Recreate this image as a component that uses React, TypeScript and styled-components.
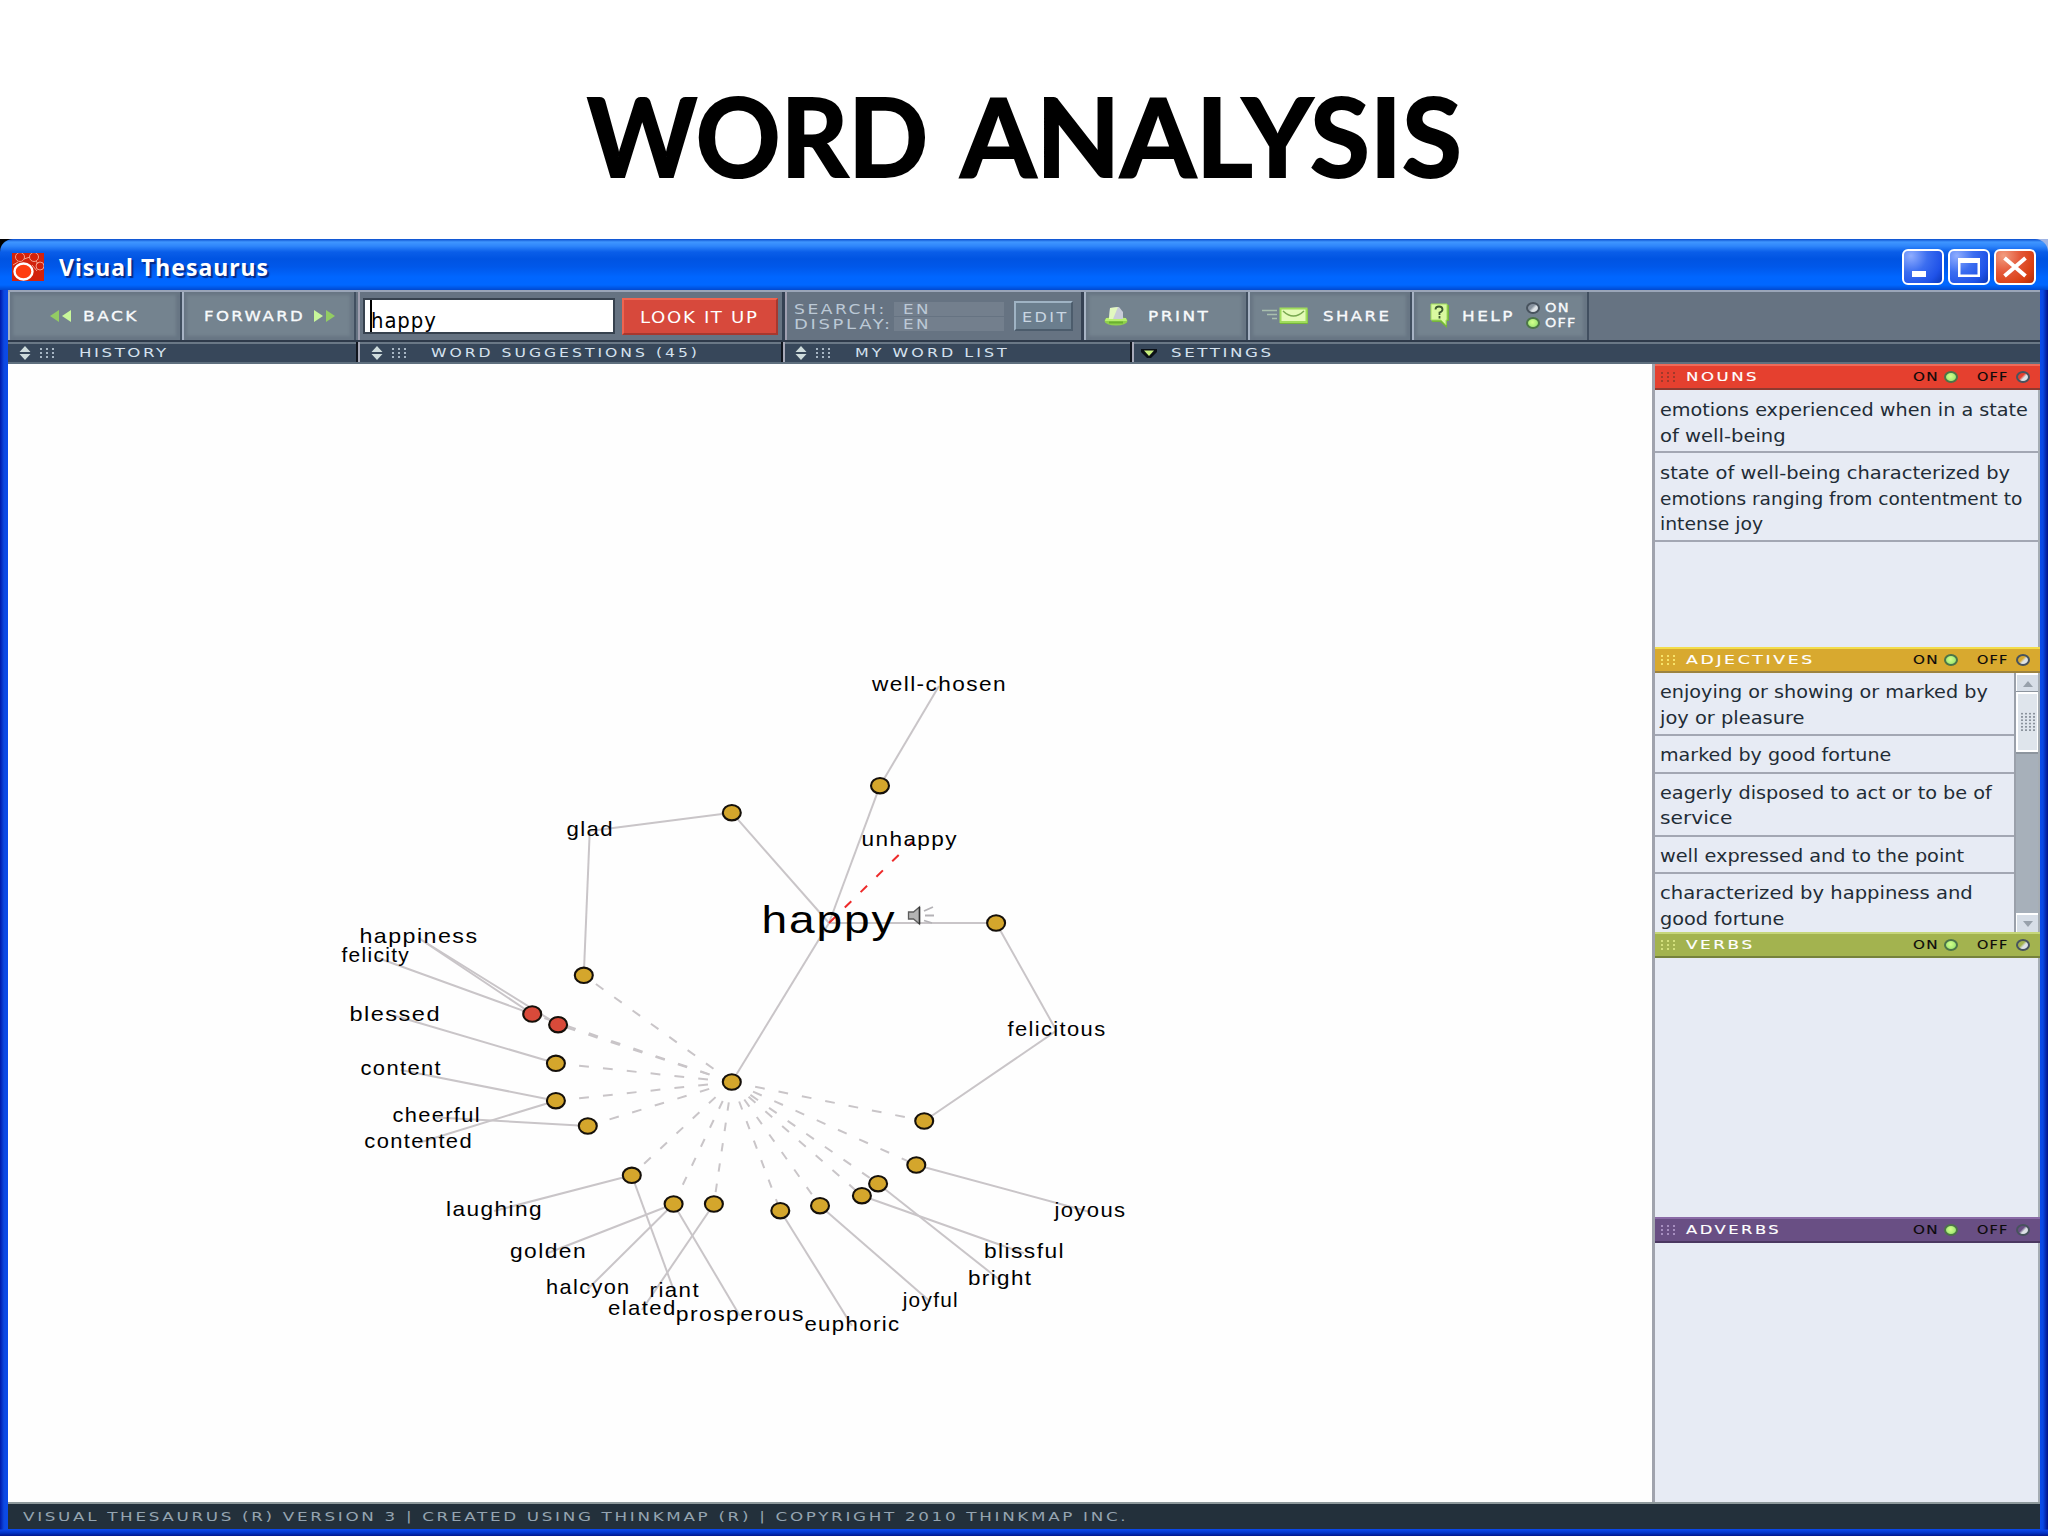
import React, { useLayoutEffect, useRef, useState } from "react";
import styled, { createGlobalStyle } from "styled-components";

const Global = createGlobalStyle`
  *, *::before, *::after { box-sizing: border-box; }
  html, body { margin: 0; padding: 0; background: #fff; }
  body { width: 2048px; height: 1536px; overflow: hidden; font-family: "DejaVu Sans", sans-serif; }
`;

/* ---------- text stretched to a fixed width ---------- */

const FitBox = styled.span<{ $w: number }>`
  display: block;
  flex: none;
  width: ${(p) => p.$w}px;
  white-space: pre;
`;

const FitInner = styled.span<{ $ls: number }>`
  display: inline-block;
  transform-origin: 0 50%;
  letter-spacing: ${(p) => p.$ls}px;
`;

function Fit({ w, ls = 0, children }: { w: number; ls?: number; children: string }) {
  const ref = useRef<HTMLSpanElement>(null);
  const [scale, setScale] = useState(1);
  useLayoutEffect(() => {
    if (ref.current) setScale(w / (ref.current.offsetWidth - ls));
  }, [w, ls, children]);
  return (
    <FitBox $w={w}>
      <FitInner ref={ref} $ls={ls} style={{ transform: `scaleX(${scale})` }}>
        {children}
      </FitInner>
    </FitBox>
  );
}

/* ---------- slide ---------- */

const Slide = styled.main`
  width: 2048px;
  height: 1536px;
  display: flex;
  flex-direction: column;
  background: #fff;
`;

const Heading = styled.h1`
  margin: 0;
  height: 239px;
  flex: none;
  display: flex;
  justify-content: center;
  gap: 33px;
  padding-top: 69px;
  font: 700 109px/132px Lato, "Open Sans", sans-serif;
  color: #000;
  -webkit-text-stroke: 2px #000;
  stroke-linejoin: round;
`;

/* ---------- window frame ---------- */

const WindowBack = styled.section`
  flex: 1;
  min-height: 0;
  background: linear-gradient(90deg, #000 0 50%, #9fb4e4 50%);
`;

const WindowFrame = styled.div`
  height: 100%;
  display: flex;
  flex-direction: column;
  padding: 0 8px 7px;
  border-radius: 13px 13px 0 0;
  background:
    linear-gradient(180deg, #0a4ccc 0, #3f96ff 3px, #2f86fb 7px, #0a5ee9 13px, #0054e2 20px, #0058ea 28px, #0066ff 38px, #0067ff 46px, #0049d0 51px, transparent 51px),
    linear-gradient(180deg, transparent calc(100% - 7px), #0b45e6 calc(100% - 6px), #0233c4 calc(100% - 3px), #00158c 100%),
    linear-gradient(90deg, #0019a8 0, #0d48e0 4px, #0a4bea 8px, #0a4bea calc(100% - 8px), #0846e2 calc(100% - 5px), #00128a 100%);
`;

const TitleBar = styled.header`
  height: 51px;
  flex: none;
  display: flex;
  align-items: center;
  padding: 4px 4px 0 4px;
`;

const WindowTitle = styled.div`
  margin-left: 15px;
  flex: 1;
  color: #fff;
  font: 700 23px/30px "Noto Sans", "Open Sans", sans-serif;
  text-shadow: 2px 2px 1px #062a86;
`;

const Controls = styled.div`
  display: flex;
  gap: 4px;
`;

const Control = styled.button<{ $close?: boolean }>`
  width: 42px;
  height: 36px;
  padding: 0;
  display: flex;
  align-items: center;
  justify-content: center;
  border: 2px solid #fff;
  border-radius: 6px;
  background: ${(p) =>
    p.$close
      ? "radial-gradient(circle at 20% 15%, #f29d80 0, #e4593a 40%, #d93f12 75%, #b02c08 100%)"
      : "radial-gradient(circle at 18% 15%, #8fadff 0, #3c6ef0 40%, #1f52e8 75%, #0a37b8 100%)"};
`;

/* ---------- toolbar ---------- */

const Toolbar = styled.nav`
  height: 50px;
  flex: none;
  display: flex;
  background: #667382;
  border-top: 2px solid #9aa5b8;
  color: #f4f8fb;
  font: 13.5px/16px "DejaVu Sans", sans-serif;
`;

const ToolButton = styled.button<{ $w: number; $pl: number }>`
  width: ${(p) => p.$w}px;
  height: 48px;
  flex: none;
  display: flex;
  align-items: center;
  padding: 0 0 0 ${(p) => p.$pl}px;
  border: 0;
  border-left: 2px solid #a7b3c4;
  border-right: 2px solid #414f60;
  background: #74838f;
  box-shadow: inset 3px 3px 3px #687684, inset -4px -4px 3px #687684;
  color: inherit;
  font: inherit;
  text-align: left;
  -webkit-text-stroke: 0.3px #fff;
`;

const ToolGroup = styled.div<{ $w: number; $pl: number }>`
  width: ${(p) => p.$w}px;
  flex: none;
  display: flex;
  align-items: center;
  padding-left: ${(p) => p.$pl}px;
  border-left: 2px solid #a09fb0;
  border-right: 3px solid #354153;
`;

const SearchField = styled.div`
  width: 252px;
  height: 36px;
  display: flex;
  align-items: flex-start;
  padding: 0 0 0 5px;
  border: 2px solid #37424f;
  background: #fff;
  color: #000;
  font: 21.5px/26px "DejaVu Sans", sans-serif;
`;

const Caret = styled.i`
  width: 2px;
  height: 32px;
  background: #000;
`;

const Query = styled.div`
  margin: 8px 0 0 -1px;
`;

const LookUp = styled.button`
  width: 156px;
  height: 37px;
  margin-left: 7px;
  display: flex;
  align-items: center;
  padding: 4px 0 0 16px;
  border: 2px solid;
  border-color: #f0644f #a8382e #a8382e #f0644f;
  background: #d7493c;
  color: #fff;
  font: 16.5px/20px "DejaVu Sans", sans-serif;
  text-align: left;
`;

const Languages = styled.div`
  display: grid;
  grid-template-columns: 100px 110px;
  grid-auto-rows: 15px;
  width: 210px;
  color: #bcc9d6;
  align-items: center;
`;

const LangValue = styled.div`
  height: 14px;
  display: flex;
  align-items: center;
  padding-left: 9px;
  background: #737f8d;
`;

const EditButton = styled.button`
  width: 59px;
  height: 30px;
  margin-left: 10px;
  padding: 2px 0 0 6px;
  border: 2px solid;
  border-color: #9fb3c4 #4c5c6c #4c5c6c #9fb3c4;
  background: #6b7e8e;
  color: #c9d6e2;
  font: inherit;
  text-align: left;
`;

const HelpSwitch = styled.div`
  display: grid;
  grid-template-columns: 14px auto;
  column-gap: 5px;
  grid-auto-rows: 15.5px;
  align-items: center;
  margin-left: 14px;
  margin-top: -1px;
  font-size: 12px;
`;

const Led = styled.i<{ $on?: boolean; $tint?: string }>`
  display: block;
  width: 14px;
  height: 12px;
  flex: none;
  border-radius: 50%;
  border: 2px solid ${(p) => (p.$on ? "#4c7548" : "#48535e")};
  background: ${(p) =>
    p.$on
      ? "radial-gradient(circle at 45% 40%, #d4ff8c, #8ce068)"
      : `linear-gradient(135deg, ${p.$tint ?? "#87929e"} 40%, #dde2e6 60%)`};
`;

/* ---------- tab strip ---------- */

const Strip = styled.div`
  height: 24px;
  flex: none;
  display: flex;
  background: #37475a;
  border-top: 2px solid #2e3a4a;
  border-bottom: 2px solid #5f6f7e;
  box-shadow: inset 0 2px 0 #6a7886;
  color: #d5e2ef;
  font: 13px/16px "DejaVu Sans", sans-serif;
`;

const Tab = styled.div<{ $w?: number; $pl: number }>`
  ${(p) => (p.$w ? `width: ${p.$w}px; flex: none; border-right: 2px solid #10151e;` : "flex: 1;")}
  display: flex;
  align-items: center;
  padding-left: ${(p) => p.$pl}px;
  padding-top: 2px;
  & + & {
    border-left: 2px solid #a7a9b8;
  }
`;

const Grip = styled.i<{ $c?: string; $m?: string }>`
  width: 15px;
  height: 10px;
  flex: none;
  margin: ${(p) => p.$m ?? "0"};
  background: radial-gradient(circle, ${(p) => p.$c ?? "#a7b6c4"} 1px, transparent 1.4px) -2px -1px / 6px 4px;
`;

/* ---------- main area ---------- */

const Body = styled.div`
  flex: 1;
  min-height: 0;
  display: flex;
  background: #fff;
`;

const Map = styled.svg`
  width: 1644px;
  height: 100%;
  flex: none;
  display: block;
  background: #fefefe;
`;

const Side = styled.aside`
  width: 388px;
  flex: none;
  display: grid;
  grid-template-rows: 283px 285px 285px 1fr;
  border-left: 3px solid #a0a3ad;
`;

const Section = styled.section`
  min-height: 0;
  display: flex;
  flex-direction: column;
  overflow: hidden;
`;

const SectionHead = styled.header<{ $bg: string; $hi: string; $lo: string }>`
  height: 26px;
  flex: none;
  display: flex;
  align-items: center;
  margin-left: -1px;
  padding: 0 10px 0 7px;
  background: ${(p) => p.$bg};
  border-top: 2px solid ${(p) => p.$hi};
  border-bottom: 2px solid ${(p) => p.$lo};
  color: #fff;
  font: 13px/16px "DejaVu Sans", sans-serif;
  -webkit-text-stroke: 0.15px currentColor;
`;

const Toggles = styled.div`
  margin-left: auto;
  display: flex;
  align-items: center;
  color: #0c0a0a;
  font: 12px/16px "DejaVu Sans", sans-serif;
`;

const SectionBody = styled.div`
  flex: 1;
  min-height: 0;
  display: flex;
  background: #e7ebf4;
  border-right: 2px solid #a6adb3;
`;

const Senses = styled.ul`
  flex: 1;
  margin: 0;
  padding: 0;
  list-style: none;
  color: #222c36;
  font: 17.7px/25.5px "DejaVu Sans", sans-serif;
`;

const Sense = styled.li<{ $tight?: boolean }>`
  padding: ${(p) => (p.$tight ? "7px 0 3px 5px" : "8px 0 2px 5px")};
  border-bottom: 2px solid #a3a7b3;
`;

const ScrollTrack = styled.div`
  width: 24px;
  flex: none;
  display: flex;
  flex-direction: column;
  background: #a7b0ba;
  border-left: 2px solid #9aa0aa;
`;

const ScrollArrow = styled.button`
  height: 19px;
  padding: 0;
  border: 0;
  border-top: 2px solid #fff;
  border-left: 1px solid #fff;
  background: #d7dee7;
  display: flex;
  align-items: center;
  justify-content: center;
`;

const ScrollThumb = styled.div`
  height: 60px;
  display: flex;
  align-items: center;
  justify-content: center;
  margin-bottom: auto;
  background: #dfe5ec;
  border: 2px solid #fff;
  border-right-width: 1px;
  box-shadow: 0 -1px 0 #8d959e, 0 2px 0 #8d959e;
`;

const ThumbGrip = styled.i`
  width: 16px;
  height: 20px;
  background: radial-gradient(circle, #8b939d 0.8px, transparent 1.3px) 0 0 / 4px 3.3px;
`;

const Footer = styled.footer`
  height: 27px;
  flex: none;
  display: flex;
  align-items: center;
  padding: 0 0 0 15px;
  background: #23303b;
  border-top: 2px solid #8e999c;
  color: #95a4b0;
  font: 12.5px/16px "DejaVu Sans", sans-serif;
`;

/* ---------- icons ---------- */

const AppIcon = () => (
  <svg width="32" height="28" viewBox="0 0 32 28">
    <rect width="32" height="28" fill="#d2220c" />
    <g fill="none" stroke="#f2a08c" strokeWidth="1">
      <circle cx="8" cy="4" r="4.5" />
      <circle cx="22" cy="4" r="4.5" />
      <circle cx="28" cy="13" r="4" />
      <path d="M12 6l6-2M24 8l2 3M20 12l5 6M1 12l5-3" />
    </g>
    <ellipse cx="11.5" cy="18.5" rx="9" ry="8" fill="#ff3d10" stroke="#fff" strokeWidth="2.4" />
  </svg>
);

const BackIcon = () => (
  <svg width="22" height="14" viewBox="0 0 22 14">
    <path d="M9 1v12L0 7z" fill="#93cc63" />
    <path d="M21 1v12l-9-6z" fill="#c8f79a" />
  </svg>
);

const ForwardIcon = () => (
  <svg width="22" height="14" viewBox="0 0 22 14">
    <path d="M1 1v12l9-6z" fill="#c8f79a" />
    <path d="M13 1v12l9-6z" fill="#93cc63" />
  </svg>
);

const SortIcon = () => (
  <svg width="12" height="14" viewBox="0 0 12 14">
    <path d="M0.500 6L6 0l5.500 6zM0.500 8l5.500 6 5.500-6z" fill="#cfdcdc" />
  </svg>
);

const DownIcon = () => (
  <svg width="16" height="11" viewBox="0 0 16 11">
    <path d="M0 1h16v3l-6 6H6L0 4z" fill="#0b1016" />
    <path d="M3 2.500h10L8 8z" fill="#c8f07c" />
  </svg>
);

const PrintIcon = () => (
  <svg width="24" height="20" viewBox="0 0 24 20">
    <ellipse cx="12" cy="15" rx="11.500" ry="4.500" fill="#8fd04c" />
    <path d="M2 12h20l1 3H1z" fill="#b8f070" />
    <path d="M5 13L6 2l9-1 4 5v7z" fill="#c9ccd8" />
    <path d="M5 13L6 2l8-1-5 12z" fill="#e2f8c0" />
    <path d="M5 15.500h14v2H5z" fill="#6bb030" />
  </svg>
);

const MailIcon = () => (
  <svg width="48" height="18" viewBox="0 0 48 18">
    <path d="M0 3.500h15M5 7.500h10M10 11.500h5" stroke="#a9bfae" strokeWidth="1.500" />
    <rect x="18" y="2" width="28" height="15" fill="#75b53c" />
    <rect x="18.500" y="1.500" width="26" height="13.500" fill="#e4fbb8" stroke="#9fdc5c" strokeWidth="2" />
    <path d="M21 4q10.500 10 21 0" fill="none" stroke="#78a850" strokeWidth="1.500" />
  </svg>
);

const HelpIcon = () => (
  <svg width="20" height="26" viewBox="0 0 20 26">
    <path d="M2 2h17v16h-2v7l-7-6H2z" fill="#75b53c" />
    <path d="M1 1h16v16h-1v5l-5-5H1z" fill="#d9f9a0" stroke="#9fdc5c" />
    <path d="M5.500 6.500q0-3 3.500-3t3.500 3q0 2-3 3v2.500M9.500 13v2.500" fill="none" stroke="#3c5a30" strokeWidth="1.800" />
  </svg>
);

/* ---------- word map data ---------- */

type Pt = [number, number];

const HUB: Pt = [731.8, 1082];
const ROOT: Pt = [829, 923];

const nodes: Record<string, { at: Pt; red?: boolean }> = {
  chosen: { at: [880, 785.7] },
  upper: { at: [731.8, 812.7] },
  glad: { at: [583.8, 975.3] },
  joy1: { at: [532.2, 1014], red: true },
  joy2: { at: [558.1, 1024.7], red: true },
  blessed: { at: [555.9, 1063.3] },
  content: { at: [555.9, 1100.7] },
  cheerful: { at: [587.8, 1126] },
  hub: { at: HUB },
  right: { at: [996.1, 923] },
  felicitous: { at: [924.2, 1121] },
  laughing: { at: [631.8, 1175.3] },
  golden: { at: [673.6, 1204] },
  elated: { at: [713.9, 1204] },
  euphoric: { at: [780.3, 1210.7] },
  joyful: { at: [820, 1205.7] },
  blissful: { at: [861.9, 1195.7] },
  bright: { at: [878.1, 1183.7] },
  joyous: { at: [916.3, 1165] },
};

/* word, left, right, baseline, linked nodes */
const words: [string, number, number, number, string[]][] = [
  ["well-chosen", 872, 1006, 691, ["chosen"]],
  ["glad", 566.5, 613, 836, ["upper", "glad"]],
  ["unhappy", 861.5, 957, 846, []],
  ["happiness", 359.5, 477.5, 943, ["joy1", "joy2"]],
  ["felicity", 341.5, 409, 962, ["joy1"]],
  ["blessed", 349.5, 440, 1020.7, ["blessed"]],
  ["content", 360.5, 441, 1075, ["content"]],
  ["cheerful", 392.4, 480, 1122.4, ["cheerful"]],
  ["contented", 364.3, 472, 1148, ["content"]],
  ["felicitous", 1007.5, 1105.5, 1035.7, ["right", "felicitous"]],
  ["laughing", 446, 542, 1216, ["laughing"]],
  ["golden", 510, 586, 1258, ["golden"]],
  ["halcyon", 546, 629.6, 1294, ["golden"]],
  ["riant", 649.6, 699, 1296.7, ["laughing"]],
  ["elated", 608, 675.7, 1315, ["elated"]],
  ["prosperous", 675.8, 803.8, 1320.7, ["golden"]],
  ["euphoric", 804.4, 899.5, 1330.7, ["euphoric"]],
  ["joyful", 902.7, 958, 1306.7, ["joyful"]],
  ["bright", 968, 1031.5, 1285, ["bright"]],
  ["blissful", 984, 1064, 1258.3, ["blissful"]],
  ["joyous", 1054.4, 1125.5, 1217, ["joyous"]],
];

const spokes = [
  "glad", "joy1", "joy2", "blessed", "content", "cheerful", "felicitous", "laughing",
  "golden", "elated", "euphoric", "joyful", "blissful", "bright", "joyous",
];

function Edge({ from, to, dashed, color = "#c9c5c8" }: { from: Pt; to: Pt; dashed?: boolean; color?: string }) {
  const dx = to[0] - from[0];
  const dy = to[1] - from[1];
  const len = Math.hypot(dx, dy);
  const period = 1 / Math.hypot(dx / len / 24, dy / len / 20.5);
  return (
    <line
      x1={from[0]}
      y1={from[1]}
      x2={to[0]}
      y2={to[1]}
      stroke={color}
      strokeWidth={2}
      strokeDasharray={dashed ? `${period * 0.41} ${period * 0.59}` : undefined}
    />
  );
}

function WordMap() {
  return (
    <Map viewBox="8 364 1644 1138" preserveAspectRatio="none">
      {spokes.map((k) => (
        <Edge key={k} from={HUB} to={nodes[k].at} dashed />
      ))}
      {["chosen", "upper", "right", "hub"].map((k) => (
        <Edge key={k} from={ROOT} to={nodes[k].at} />
      ))}
      {words.flatMap(([w, l, r, b, links]) =>
        links.map((k) => <Edge key={w + k} from={nodes[k].at} to={[(l + r) / 2, b - 5]} />)
      )}
      <Edge from={ROOT} to={[912, 842]} dashed color="#ee2a2a" />
      {Object.entries(nodes).map(([k, n]) => (
        <ellipse key={k} cx={n.at[0]} cy={n.at[1]} rx={9} ry={7.7} fill={n.red ? "#d84a3a" : "#d4a62c"} stroke="#15100a" strokeWidth={2.1} />
      ))}
      <g fontFamily='"Liberation Sans", Arial, sans-serif' fill="#000">
        {words.map(([w, l, r, b]) => (
          <text key={w} x={l} y={b} fontSize={20.8} letterSpacing={1.3} textLength={r - l + 1} lengthAdjust="spacingAndGlyphs">
            {w}
          </text>
        ))}
        <text x={761.5} y={932.5} fontSize={39} letterSpacing={1.6} textLength={135} lengthAdjust="spacingAndGlyphs">
          happy
        </text>
      </g>
      <path d="M908.500 912h5l6-5v17l-6-5h-5z" fill="#b4b4b4" stroke="#5c5c5c" strokeWidth="1.300" />
      <path d="M919.500 907v17" stroke="#333" strokeWidth="1.500" />
      <path d="M924 911l9-4M925 915.500h9M924 920.500l8 2.500" stroke="#b4b2b6" strokeWidth="1.800" fill="none" />
    </Map>
  );
}

/* ---------- side panel data ---------- */

type Line = [string, number];

const nounSenses: Line[][] = [
  [["emotions experienced when in a state", 368], ["of well-being", 126]],
  [["state of well-being characterized by", 350], ["emotions ranging from contentment to", 362], ["intense joy", 103]],
];

const adjectiveSenses: Line[][] = [
  [["enjoying or showing or marked by", 328], ["joy or pleasure", 145]],
  [["marked by good fortune", 231]],
  [["eagerly disposed to act or to be of", 332], ["service", 72]],
  [["well expressed and to the point", 304]],
  [["characterized by happiness and", 313], ["good fortune", 124]],
];

const sections = [
  { name: "NOUNS", w: 70, bg: "#e5402f", hi: "#ef6a58", lo: "#8e3a30", dot: "#a0392b", senses: nounSenses },
  { name: "ADJECTIVES", w: 126, bg: "#d8a92f", hi: "#f3dc4a", lo: "#9c8340", dot: "#f7e36a", senses: adjectiveSenses, scroll: true },
  { name: "VERBS", w: 66, bg: "#a3b34f", hi: "#c6d67a", lo: "#76823c", dot: "#d3e07c", senses: [] as Line[][] },
  { name: "ADVERBS", w: 93, bg: "#694f84", hi: "#8a6aa6", lo: "#4a3760", dot: "#a78fc0", senses: [] as Line[][] },
];

const Spacer = styled.i<{ $w: number }>`
  width: ${(p) => p.$w}px;
  flex: none;
`;

export default function App() {
  return (
    <Slide>
      <Global />
      <Heading>
        <Fit w={341}>WORD</Fit>
        <Fit w={501}>ANALYSIS</Fit>
      </Heading>
      <WindowBack>
        <WindowFrame>
          <TitleBar>
            <AppIcon />
            <WindowTitle>
              <Fit w={209} ls={1}>Visual Thesaurus</Fit>
            </WindowTitle>
            <Controls>
              <Control aria-label="Minimize">
                <svg width="34" height="28"><rect x="6" y="18" width="14" height="6" fill="#fff" /></svg>
              </Control>
              <Control aria-label="Maximize">
                <svg width="34" height="28"><path d="M6 5h22v19H6zM8.500 10h17v11.500h-17z" fillRule="evenodd" fill="#fff" /></svg>
              </Control>
              <Control $close aria-label="Close">
                <svg width="34" height="28"><path d="M6.500 5l21 18M27.500 5l-21 18" stroke="#fff" strokeWidth="4" /></svg>
              </Control>
            </Controls>
          </TitleBar>

          <Toolbar>
            <ToolButton $w={174} $pl={40}>
              <BackIcon />
              <Spacer $w={11} />
              <Fit w={54} ls={2}>BACK</Fit>
            </ToolButton>
            <ToolButton $w={174} $pl={20}>
              <Fit w={99} ls={2}>FORWARD</Fit>
              <Spacer $w={10} />
              <ForwardIcon />
            </ToolButton>
            <Spacer $w={2} />
            <ToolGroup $w={427} $pl={3}>
              <SearchField>
                <Caret />
                <Query><Fit w={65} ls={1}>happy</Fit></Query>
              </SearchField>
              <LookUp>
                <Fit w={117} ls={1.5}>LOOK IT UP</Fit>
              </LookUp>
            </ToolGroup>
            <ToolGroup $w={299} $pl={7}>
              <Languages>
                <Fit w={90} ls={2}>SEARCH:</Fit>
                <LangValue><Fit w={26} ls={2}>EN</Fit></LangValue>
                <Fit w={96} ls={2}>DISPLAY:</Fit>
                <LangValue><Fit w={26} ls={2}>EN</Fit></LangValue>
              </Languages>
              <EditButton><Fit w={44} ls={2}>EDIT</Fit></EditButton>
            </ToolGroup>
            <ToolButton $w={164} $pl={18}>
              <PrintIcon />
              <Spacer $w={20} />
              <Fit w={60} ls={2}>PRINT</Fit>
            </ToolButton>
            <ToolButton $w={164} $pl={12}>
              <MailIcon />
              <Spacer $w={13} />
              <Fit w={66} ls={2}>SHARE</Fit>
            </ToolButton>
            <ToolButton $w={177} $pl={16}>
              <HelpIcon />
              <Spacer $w={12} />
              <Fit w={50} ls={2}>HELP</Fit>
              <HelpSwitch>
                <Led />
                <Fit w={23} ls={1}>ON</Fit>
                <Led $on />
                <Fit w={30} ls={1}>OFF</Fit>
              </HelpSwitch>
            </ToolButton>
          </Toolbar>

          <Strip>
            <Tab $w={350} $pl={11}>
              <SortIcon /><Grip $m="0 24px 0 9px" />
              <Fit w={87} ls={2}>HISTORY</Fit>
            </Tab>
            <Tab $w={425} $pl={11}>
              <SortIcon /><Grip $m="0 24px 0 9px" />
              <Fit w={266} ls={2.5}>WORD SUGGESTIONS (45)</Fit>
            </Tab>
            <Tab $w={349} $pl={10}>
              <SortIcon /><Grip $m="0 24px 0 9px" />
              <Fit w={152} ls={2.5}>MY WORD LIST</Fit>
            </Tab>
            <Tab $pl={7}>
              <DownIcon />
              <Spacer $w={14} />
              <Fit w={100} ls={2}>SETTINGS</Fit>
            </Tab>
          </Strip>

          <Body>
            <WordMap />
            <Side>
              {sections.map((s) => (
                <Section key={s.name}>
                  <SectionHead $bg={s.bg} $hi={s.hi} $lo={s.lo}>
                    <Grip $c={s.dot} $m="0 10px 0 0" />
                    <Fit w={s.w} ls={2}>{s.name}</Fit>
                    <Toggles>
                      <Fit w={24} ls={1}>ON</Fit>
                      <Spacer $w={7} />
                      <Led $on />
                      <Spacer $w={19} />
                      <Fit w={30} ls={1}>OFF</Fit>
                      <Spacer $w={9} />
                      <Led $tint={s.bg} />
                    </Toggles>
                  </SectionHead>
                  <SectionBody>
                    <Senses>
                      {s.senses.map((lines, i) => (
                        <Sense key={i} $tight={s.scroll}>
                          {lines.map(([t, w]) => (
                            <Fit key={t} w={w}>{t}</Fit>
                          ))}
                        </Sense>
                      ))}
                    </Senses>
                    {s.scroll && (
                      <ScrollTrack>
                        <ScrollArrow aria-label="Scroll up">
                          <svg width="12" height="6"><path d="M1 6l5-6 5 6z" fill="#98a1ab" /></svg>
                        </ScrollArrow>
                        <ScrollThumb><ThumbGrip /></ScrollThumb>
                        <ScrollArrow aria-label="Scroll down">
                          <svg width="12" height="6"><path d="M1 0l5 6 5-6z" fill="#98a1ab" /></svg>
                        </ScrollArrow>
                      </ScrollTrack>
                    )}
                  </SectionBody>
                </Section>
              ))}
            </Side>
          </Body>

          <Footer>
            <Fit w={1102} ls={2}>VISUAL THESAURUS (R) VERSION 3 | CREATED USING THINKMAP (R) | COPYRIGHT 2010 THINKMAP INC.</Fit>
          </Footer>
        </WindowFrame>
      </WindowBack>
    </Slide>
  );
}
